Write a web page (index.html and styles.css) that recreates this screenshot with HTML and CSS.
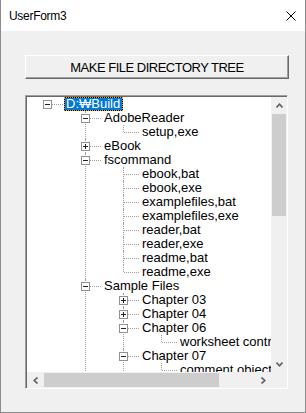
FILE: index.html
```html
<!DOCTYPE html>
<html lang="ko">
<head>
    <meta charset="UTF-8">
    <meta name="viewport" content="width=device-width, initial-scale=1.0">
    <title>UserForm3</title>
    <link rel="stylesheet" href="styles.css">
</head>
<body>
    <div class="window">
        <div class="titlebar">
            <span class="title">UserForm3</span>
            <svg class="close" width="10" height="10" viewBox="0 0 10 10">
                <path d="M0.5 0.5L9.5 9.5M9.5 0.5L0.5 9.5" stroke="#000" stroke-width="1" fill="none"/>
            </svg>
        </div>

        <div class="form">
            <button class="make-btn">MAKE FILE DIRECTORY TREE</button>

            <div class="tree-frame">
                <div class="tree-inner">
                    <div class="tree-view">
                        <ul class="tree">
                            <li>
                                <div class="node"><span class="twisty"><i class="box"></i></span><span class="label selected">D:₩Build</span></div>
                                <!-- "more": the list goes on below the visible part -->
                                <ul class="more">
                                    <li>
                                        <div class="node"><span class="twisty"><i class="box"></i></span><span class="label">AdobeReader</span></div>
                                        <ul>
                                            <li><div class="node"><span class="twisty"></span><span class="label">setup,exe</span></div></li>
                                        </ul>
                                    </li>
                                    <li>
                                        <div class="node"><span class="twisty"><i class="box plus"></i></span><span class="label">eBook</span></div>
                                    </li>
                                    <li>
                                        <div class="node"><span class="twisty"><i class="box"></i></span><span class="label">fscommand</span></div>
                                        <ul>
                                            <li><div class="node"><span class="twisty"></span><span class="label">ebook,bat</span></div></li>
                                            <li><div class="node"><span class="twisty"></span><span class="label">ebook,exe</span></div></li>
                                            <li><div class="node"><span class="twisty"></span><span class="label">examplefiles,bat</span></div></li>
                                            <li><div class="node"><span class="twisty"></span><span class="label">examplefiles,exe</span></div></li>
                                            <li><div class="node"><span class="twisty"></span><span class="label">reader,bat</span></div></li>
                                            <li><div class="node"><span class="twisty"></span><span class="label">reader,exe</span></div></li>
                                            <li><div class="node"><span class="twisty"></span><span class="label">readme,bat</span></div></li>
                                            <li><div class="node"><span class="twisty"></span><span class="label">readme,exe</span></div></li>
                                        </ul>
                                    </li>
                                    <li>
                                        <div class="node"><span class="twisty"><i class="box"></i></span><span class="label">Sample Files</span></div>
                                        <ul class="more">
                                            <li><div class="node"><span class="twisty"><i class="box plus"></i></span><span class="label">Chapter 03</span></div></li>
                                            <li><div class="node"><span class="twisty"><i class="box plus"></i></span><span class="label">Chapter 04</span></div></li>
                                            <li>
                                                <div class="node"><span class="twisty"><i class="box"></i></span><span class="label">Chapter 06</span></div>
                                                <ul>
                                                    <li><div class="node"><span class="twisty"></span><span class="label">worksheet controls</span></div></li>
                                                </ul>
                                            </li>
                                            <li>
                                                <div class="node"><span class="twisty"><i class="box"></i></span><span class="label">Chapter 07</span></div>
                                                <ul>
                                                    <li><div class="node"><span class="twisty"></span><span class="label">comment objects</span></div></li>
                                                </ul>
                                            </li>
                                        </ul>
                                    </li>
                                </ul>
                            </li>
                        </ul>
                    </div>

                    <div class="vscroll">
                        <div class="arrow">
                            <svg width="7" height="5" viewBox="0 0 7 5"><path d="M0.5 4.5L3.5 1.2L6.5 4.5" fill="none" stroke="#606060" stroke-width="1.6"/></svg>
                        </div>
                        <div class="track"><div class="vthumb"></div></div>
                        <div class="arrow">
                            <svg width="7" height="5" viewBox="0 0 7 5"><path d="M0.5 0.5L3.5 3.8L6.5 0.5" fill="none" stroke="#606060" stroke-width="1.6"/></svg>
                        </div>
                    </div>

                    <div class="hscroll">
                        <div class="arrow">
                            <svg width="5" height="7" viewBox="0 0 5 7"><path d="M4.5 0.5L1.2 3.5L4.5 6.5" fill="none" stroke="#606060" stroke-width="1.6"/></svg>
                        </div>
                        <div class="track"><div class="hthumb"></div></div>
                        <div class="arrow">
                            <svg width="5" height="7" viewBox="0 0 5 7"><path d="M0.5 0.5L3.8 3.5L0.5 6.5" fill="none" stroke="#606060" stroke-width="1.6"/></svg>
                        </div>
                    </div>

                    <div class="corner"></div>
                </div>
            </div>
        </div>
    </div>
</body>
</html>
```

FILE: styles.css
```css
body {
    margin: 0;
    font-family: "Liberation Sans", Arial, "Noto Sans CJK KR", sans-serif;
    color: #000;
}

.window {
    width: 306px;
    height: 413px;
    box-sizing: border-box;
    border: 1px solid #8c8c8c;
    border-top: none;
    background-color: #f0f0f0;
}

.titlebar {
    height: 31px;
    background-color: #fff;
    display: flex;
    align-items: center;
    justify-content: space-between;
    padding: 0 9px 0 8px;
}

.title {
    font-size: 12px;
    letter-spacing: -0.3px;
}

.close {
    display: block;
}

.form {
    padding: 24px 0 0 24px;
}

.make-btn {
    display: block;
    width: 264px;
    height: 24px;
    box-sizing: border-box;
    margin: 0 0 16px;
    padding: 0;
    border: 1px solid;
    border-color: #fff #696969 #696969 #fff;
    box-shadow: inset -1px -1px 0 #a0a0a0;
    background-color: #f0f0f0;
    font-family: inherit;
    font-size: 13px;
    letter-spacing: -0.5px;
    color: #000;
}

/* sunken frame round the tree */
.tree-frame {
    width: 263px;
    height: 294px;
    box-sizing: border-box;
    border: 1px solid;
    border-color: #a0a0a0 #fff #fff #a0a0a0;
}

.tree-inner {
    height: 100%;
    box-sizing: border-box;
    border-top: 1px solid #696969;
    border-left: 1px solid #696969;
    display: grid;
    grid-template-columns: 1fr 16px;
    grid-template-rows: 1fr 16px;
}

.tree-view {
    background-color: #fff;
    overflow: hidden;
}

.tree, .tree ul {
    list-style: none;
    margin: 0;
    padding: 0;
}

.tree ul {
    padding-left: 38px;
}

.tree li {
    position: relative;
}

.tree ul > li::before {
    content: "";
    position: absolute;
    left: 20px;
    top: 0;
    bottom: 0;
    border-left: 1px dotted #a0a0a0;
}

.tree ul > li:last-child::before {
    bottom: auto;
    height: 7px;
}

.tree ul.more > li:last-child::before {
    bottom: 0;
    height: auto;
}

.node {
    display: flex;
    align-items: center;
    height: 14px;
    white-space: nowrap;
}

.twisty {
    position: relative;
    flex: none;
    width: 37px;
    height: 14px;
}

.twisty::before {
    content: "";
    position: absolute;
    left: 21px;
    top: 7px;
    width: 15px;
    border-top: 1px dotted #a0a0a0;
}

.box {
    position: absolute;
    left: 16px;
    top: 3px;
    width: 9px;
    height: 9px;
    box-sizing: border-box;
    border: 1px solid #919191;
    background-color: #fff;
    z-index: 1;
}

.box::before {
    content: "";
    position: absolute;
    left: 1px;
    top: 3px;
    width: 5px;
    height: 1px;
    background-color: #222;
}

.box.plus::after {
    content: "";
    position: absolute;
    left: 3px;
    top: 1px;
    width: 1px;
    height: 5px;
    background-color: #222;
}

.label {
    font-size: 13px;
    line-height: 12px;
    border: 1px solid transparent;
    padding: 0 2px 0 1px;
}

.label.selected {
    color: #fff;
    border: 1px dotted #e8a33d;
    background: linear-gradient(#0078d7, #0078d7) padding-box, #000;
}

/* scroll bars */
.vscroll, .hscroll, .corner {
    background-color: #f0f0f0;
}

.vscroll {
    display: flex;
    flex-direction: column;
}

.hscroll {
    display: flex;
}

.arrow {
    flex: none;
    width: 16px;
    height: 16px;
    display: flex;
    align-items: center;
    justify-content: center;
}

.arrow svg {
    display: block;
}

.track {
    flex: 1;
}

.vthumb {
    margin: 1px 1px 0;
    height: 102px;
    background-color: #cdcdcd;
}

.hthumb {
    margin: 1px 0 0 1px;
    width: 175px;
    height: 14px;
    background-color: #cdcdcd;
}
```
